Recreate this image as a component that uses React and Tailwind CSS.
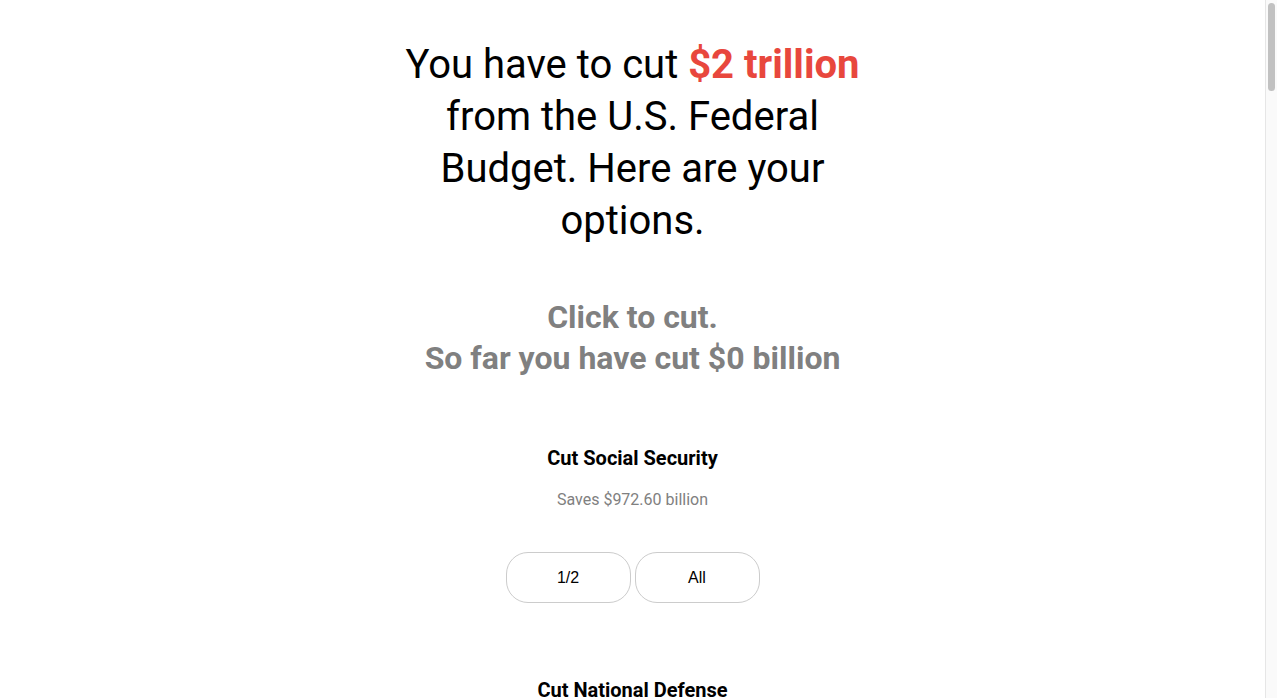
const options = [
    { name: "Cut Social Security", saves: "972.60" },
    { name: "Cut National Defense" },
];

function Option({ name, saves }) {
    return (
        <div className="flex flex-col items-center mb-[75px]">
            <h3 className="text-[20px] leading-[24px] font-bold text-black">{name}</h3>
            {saves && (
                <>
                    <p className="mt-[20px] text-[16px] leading-[20px] text-[#808080]">Saves ${saves} billion</p>
                    <div className="mt-[42px] flex gap-[4px]">
                        <button className="w-[125px] h-[51px] rounded-[22px] border border-[#cccccc] bg-white font-['Liberation_Sans',Arial,sans-serif] text-[16px] text-black">1/2</button>
                        <button className="w-[125px] h-[51px] rounded-[22px] border border-[#cccccc] bg-white font-['Liberation_Sans',Arial,sans-serif] text-[16px] text-black">All</button>
                    </div>
                </>
            )}
        </div>
    );
}

export default function App() {
    return (
        <div className="flex h-[698px] bg-white font-['Roboto',sans-serif] text-center">
            <main className="flex-1 overflow-hidden">
                <div className="pt-[39px] flex flex-col items-center">
                    <h1 className="w-[480px] text-[40px] leading-[52px] font-normal text-black">
                        You have to cut <span className="font-bold text-[#e8473d]">$2 trillion</span> from the U.S. Federal Budget. Here are your options.
                    </h1>
                    <h2 className="mt-[50px] text-[32px] leading-[41px] font-bold text-[#808080]">
                        Click to cut.
                        <br />
                        So far you have cut $0 billion
                    </h2>
                    <div className="mt-[67px]">
                        {options.map((o) => (
                            <Option key={o.name} {...o} />
                        ))}
                    </div>
                </div>
            </main>
            {/* scrollbar */}
            <div className="w-[12px] bg-[#fafafa] border-l border-[#e6e6e6] flex justify-center pt-[3px]">
                <div className="w-[7px] h-[88px] rounded-full bg-[#c1c1c1]" />
            </div>
        </div>
    );
}
